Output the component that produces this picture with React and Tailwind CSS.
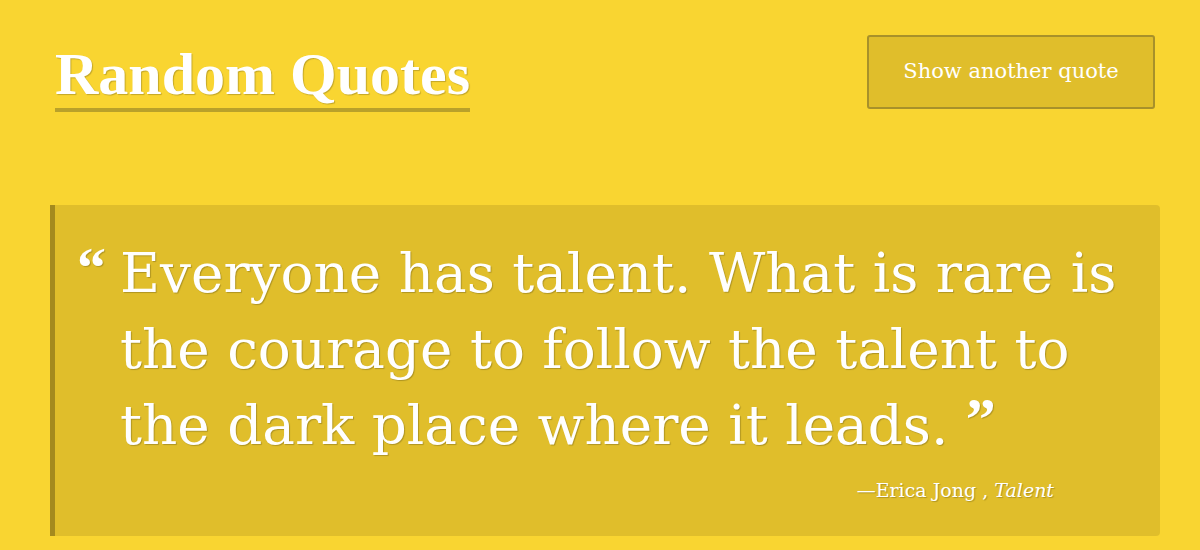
import React from 'react';

const quote = {
    text: "Everyone has talent. What is rare is the courage to follow the talent to the dark place where it leads.",
    author: "Erica Jong",
    source: "Talent"
};

const App = () => {
    return (
        <div className="min-h-[550px] w-full bg-[#f9d531] text-white overflow-hidden [font-family:'DejaVu_Serif',serif] [text-shadow:1px_1px_1px_rgba(0,0,0,0.22)]">
            <div className="pl-[55px] pr-[45px] pt-[35px]">
                <header className="flex justify-between items-start">
                    <h1 className="mt-[8px] inline-block border-b-[4px] border-[#b9a12a] [font-family:'Liberation_Serif',serif] text-[60px] leading-[62px] font-bold pb-[3px]">
                        Random Quotes
                    </h1>
                    <button className="w-[288px] h-[74px] bg-[#e0be2b] border-2 border-[#a8912a] rounded-[3px] text-[21px] text-white">
                        Show another quote
                    </button>
                </header>
            </div>

            <div className="pl-[50px] pr-[40px] mt-[93px]">
                <blockquote className="bg-[#e0be2b] border-l-[5px] border-[#a48a1e] rounded-r-[4px] pt-[30px] pb-[31px] pl-[22px] pr-[33px]">
                    <div className="flex items-start">
                        <span className="[font-family:'Liberation_Serif',serif] text-[58px] leading-[58px] font-bold w-[43px] shrink-0 mt-[4px]">“</span>
                        <p className="text-[54.8px] leading-[76px]">
                            {quote.text} <span className="[font-family:'Liberation_Serif',serif] text-[60px] font-bold align-top leading-[64px]">”</span>
                        </p>
                    </div>
                    <div className="text-right pr-[73px] mt-[13px] text-[19px]">
                        —{quote.author} , <em>{quote.source}</em>
                    </div>
                </blockquote>
            </div>
        </div>
    );
};

export default App;
